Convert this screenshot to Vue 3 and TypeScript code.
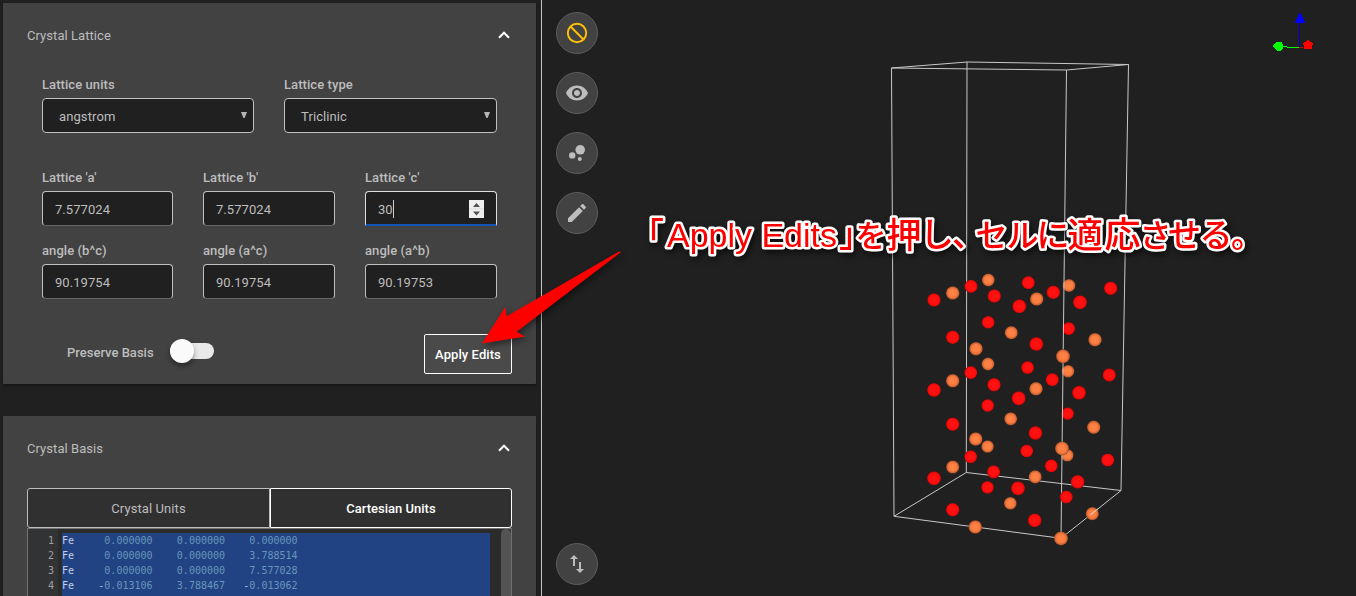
<script setup lang="ts">
interface Field { label: string; value: string; focused?: boolean }
interface Atom { x: number; y: number; kind: 'o' | 'fe'; r: number }
interface Glyph { ch: string; x: number; y: number; size: number }

const selects: Field[] = [
  { label: 'Lattice units', value: 'angstrom' },
  { label: 'Lattice type', value: 'Triclinic' },
]
const lengths: Field[] = [
  { label: "Lattice 'a'", value: '7.577024' },
  { label: "Lattice 'b'", value: '7.577024' },
  { label: "Lattice 'c'", value: '30', focused: true },
]
const angles: Field[] = [
  { label: 'angle (b^c)', value: '90.19754' },
  { label: 'angle (a^c)', value: '90.19754' },
  { label: 'angle (a^b)', value: '90.19753' },
]
const rows: string[][] = [
  ['0.000000', '0.000000', '0.000000'],
  ['0.000000', '0.000000', '3.788514'],
  ['0.000000', '0.000000', '7.577028'],
  ['-0.013106', '3.788467', '-0.013062'],
]
const pads = [13, 12, 12]

const make = (kind: 'o' | 'fe', pts: number[][]): Atom[] =>
  pts.map(([x, y, r]) => ({ x, y, kind, r: r ?? 6.8 }))

// Atoms behind the front vertical edge of the cell
const backAtoms: Atom[] = [
  ...make('fe', [[1069, 285.5, 6.5], [1068, 371.2, 6.3], [1067.3, 455.3, 6.3]]),
  ...make('o', [[1068.7, 328.6, 6.5], [1067.7, 413.6, 6.3]]),
]
const frontAtoms: Atom[] = [
  ...make('o', [
    [934, 300], [971, 286.3, 6.6], [994.3, 296], [1028.3, 282.7, 6.6], [1019.3, 306.3, 7], [1053.3, 292.3],
    [1080, 302.3, 7], [1110.7, 288.3], [988.2, 322.3, 6.4], [952.7, 337.3], [1036.3, 344, 7], [1027.6, 367.6, 6.5],
    [970.8, 372.6, 6.5], [994, 384.7], [934, 390, 7], [1052.3, 379.7, 6.6], [1079, 392.8, 7], [1109.3, 375, 6.7],
    [1018.7, 398.2, 7], [987.7, 405.5, 6.4], [952.7, 424.2], [1035.4, 433, 6.9], [1026.7, 451, 6.5],
    [970.7, 456.7, 6.5], [1051.3, 465.8, 6.5], [1107.7, 460, 6.6], [934, 478.3, 7], [993.6, 471.8, 6.6],
    [987.5, 487.4, 6.4], [1018, 488.3, 7], [1077.7, 481.8, 6.9], [1066.3, 497, 6.5], [952.7, 509.7],
    [1034.7, 520.3, 6.9],
  ]),
  ...make('fe', [
    [952.7, 293], [988.3, 280, 6.4], [1036.7, 299], [1011.3, 332.7, 6.6], [1095, 339.7], [976, 348.7],
    [988, 364, 6.4], [1063, 356.3, 7], [952.7, 380.8], [1036, 388.7], [1010.7, 418.8, 6.5], [1093.7, 427.3, 6.7],
    [975.7, 439], [987.6, 446.5, 6.3], [1062, 448.4, 7], [952.7, 467, 6.6], [1035.2, 476.8, 6.6],
    [1010.3, 503.3, 6.4], [975.3, 527, 6.8], [1092.3, 513.7, 6.6], [1061, 538.4, 7],
  ]),
]

const glyphs: Glyph[] = [
  { ch: '「', x: 630, y: 247, size: 34 },
  { ch: '」', x: 839, y: 247, size: 34 },
  { ch: 'を', x: 855.5, y: 247, size: 31 },
  { ch: '押', x: 886.5, y: 247.5, size: 35 },
  { ch: 'し', x: 920, y: 247, size: 34 },
  { ch: '、', x: 952, y: 246, size: 33 },
  { ch: 'セ', x: 975.5, y: 246.5, size: 32 },
  { ch: 'ル', x: 1006.5, y: 246.5, size: 32 },
  { ch: 'に', x: 1036.5, y: 247, size: 33 },
  { ch: '適', x: 1067.5, y: 247.5, size: 35.5 },
  { ch: '応', x: 1104.5, y: 247.5, size: 36 },
  { ch: 'さ', x: 1139.5, y: 247, size: 32 },
  { ch: 'せ', x: 1168, y: 247, size: 33 },
  { ch: 'る', x: 1199.5, y: 247, size: 33 },
  { ch: '。', x: 1231, y: 247, size: 33 },
]
</script>

<template>
  <div class="app">
    <aside class="panel">
      <section class="card lattice">
        <header class="head">
          <span>Crystal Lattice</span>
          <svg class="chev" viewBox="0 0 12 8"><path d="M1 6.7 6 1.7l5 5" /></svg>
        </header>
        <div class="grid two">
          <div v-for="f in selects" :key="f.label" class="field">
            <label>{{ f.label }}</label>
            <div class="box select">
              <span>{{ f.value }}</span>
              <svg class="caret" viewBox="0 0 6 6"><path d="M0 0h6L3.6 6H2.4z" /></svg>
            </div>
          </div>
        </div>
        <div class="grid three first">
          <div v-for="f in lengths" :key="f.label" class="field">
            <label>{{ f.label }}</label>
            <div class="box" :class="{ focused: f.focused }">
              <span>{{ f.value }}</span><i v-if="f.focused" class="cursor"></i>
              <svg v-if="f.focused" class="spin" viewBox="0 0 15 18">
                <rect width="15" height="18" />
                <path d="M4 7 7.5 3 11 7zM4 11.5h7L7.5 15.5z" /><path class="sep" d="M0 9h15" />
              </svg>
            </div>
          </div>
        </div>
        <div class="grid three second">
          <div v-for="f in angles" :key="f.label" class="field">
            <label>{{ f.label }}</label>
            <div class="box"><span>{{ f.value }}</span></div>
          </div>
        </div>
        <div class="actions">
          <span class="preserve">Preserve Basis</span>
          <span class="toggle"><i></i></span>
          <button class="apply">Apply Edits</button>
        </div>
      </section>

      <section class="card basis">
        <header class="head">
          <span>Crystal Basis</span>
          <svg class="chev" viewBox="0 0 12 8"><path d="M1 6.7 6 1.7l5 5" /></svg>
        </header>
        <div class="tabs">
          <button class="tab">Crystal Units</button>
          <button class="tab active">Cartesian Units</button>
        </div>
        <div class="editor">
          <div class="gutter"><div v-for="(r, i) in rows" :key="i">{{ i + 1 }}</div></div>
          <div class="code">
            <div v-for="(r, i) in rows" :key="i" class="line">Fe<template v-for="(n, j) in r" :key="j"><span class="num">{{ ' '.repeat(pads[j] - n.length) }}<b v-if="n[0] === '-'">-</b>{{ n.replace('-', '') }}</span></template></div>
          </div>
          <div class="scroll"><i></i></div>
        </div>
      </section>
    </aside>

    <main class="viewer">
      <nav class="tools">
        <button class="tool"><svg viewBox="0 0 24 24" class="ban"><circle cx="12" cy="12" r="9.2" /><path d="M5.5 5.5l13 13" /></svg></button>
        <button class="tool"><svg viewBox="0 0 24 24"><path d="M12 4.500C7 4.500 2.730 7.610 1 12c1.730 4.390 6 7.500 11 7.500s9.270-3.110 11-7.500c-1.730-4.390-6-7.500-11-7.500zM12 17c-2.760 0-5-2.240-5-5s2.240-5 5-5 5 2.240 5 5-2.240 5-5 5zm0-8c-1.660 0-3 1.340-3 3s1.340 3 3 3 3-1.340 3-3-1.340-3-3-3z" /></svg></button>
        <button class="tool"><svg viewBox="0 0 24 24"><circle cx="7.2" cy="14.4" r="3.2" /><circle cx="14.8" cy="18" r="2" /><circle cx="15.2" cy="8.8" r="4.8" /></svg></button>
        <button class="tool"><svg viewBox="0 0 24 24"><path d="M3 17.250V21h3.750L17.810 9.940l-3.750-3.750L3 17.250zM20.710 7.040c.39-.39.39-1.020 0-1.410l-2.340-2.340c-.39-.39-1.020-.39-1.410 0l-1.830 1.830 3.750 3.750 1.830-1.830z" /></svg></button>
        <button class="tool last"><svg viewBox="0 0 24 24"><path d="M16 17.010V10h-2v7.010h-3L15 21l4-3.990h-3zM9 3L5 6.990h3V14h2V6.990h3L9 3z" /></svg></button>
      </nav>
    </main>

    <svg class="scene" viewBox="0 0 1356 596">
      <defs>
        <radialGradient id="gO"><stop offset="0" stop-color="#ff1414" /><stop offset=".72" stop-color="#ff0d0d" /><stop offset=".9" stop-color="#d80a0a" /><stop offset="1" stop-color="#850808" /></radialGradient>
        <radialGradient id="gFe"><stop offset="0" stop-color="#ff8547" /><stop offset=".62" stop-color="#fa7c40" /><stop offset=".88" stop-color="#c96232" /><stop offset="1" stop-color="#7b3d20" /></radialGradient>
      </defs>
      <circle v-for="(a, i) in backAtoms" :key="'b' + i" :cx="a.x" :cy="a.y" :r="a.r" :fill="a.kind === 'o' ? 'url(#gO)' : 'url(#gFe)'" />
      <g class="cell">
        <path d="M891.5 68 967 62l161.500 2.500L1066.500 70z" />
        <path d="M894 516.300 966.300 472.500 1121 490.500 1061 538.300z" />
        <path d="M891.500 68 894 516.300M967 62 966.300 472.500M1128.500 64.500 1121 490.500M1066.500 70 1061 538.300" />
      </g>
      <circle v-for="(a, i) in frontAtoms" :key="'f' + i" :cx="a.x" :cy="a.y" :r="a.r" :fill="a.kind === 'o' ? 'url(#gO)' : 'url(#gFe)'" />
      <path class="front-edge" d="M1098 508.800 1090.500 514.800" />

      <g shape-rendering="crispEdges">
        <path d="M1299.500 23v24" stroke="#0000c8" />
        <path d="M1300 11.500 1305.500 23h-11z" fill="#00f" />
        <path d="M1283 46.500h4M1287 47.500h12" stroke="#0f0" />
        <path d="M1272 46 1277.500 41.500h3.500l2 3.500v3l-2 3h-4z" fill="#0f0" />
        <path d="M1299 47.500h4" stroke="#c00" />
        <path d="M1308 40 1313 43.500 1311.500 49h-7L1303 43.500z" fill="#f00" />
      </g>

      <path class="arrow" d="M482 343.500 505.300 307 506.700 316.300 619 251.500Q620.500 251 620.500 252.500L516.700 331.700 525.200 336.400z" />

      <g class="caption">
        <text x="667" y="247" class="latin" textLength="170" lengthAdjust="spacing">Apply Edits</text>
        <text><tspan v-for="g in glyphs" :key="g.ch" :x="g.x" :y="g.y" :font-size="g.size">{{ g.ch }}</tspan></text>
      </g>
    </svg>
  </div>
</template>

<style>
body { background: #202020; overflow: hidden; }
</style>
<style scoped>
* { box-sizing: border-box; }
.app { position: relative; display: flex; width: 1356px; height: 596px; overflow: hidden; background: #202020; color: #bdbdbd; font-family: Roboto, "Noto Sans", sans-serif; font-size: 13px; }
.panel { width: 542px; flex: none; padding: 3px 5px 0 3px; border-right: 1px solid #c4c4c4; }
.card { background: #424242; padding: 0 24px; border-radius: 1px; box-shadow: 0 2px 3px rgba(0, 0, 0, .35); }
.lattice { height: 381px; }
.basis { height: 220px; margin-top: 32px; }
.head { height: 64px; display: flex; align-items: center; justify-content: space-between; letter-spacing: .06px; }
.chev { width: 12px; height: 8px; margin-right: 2px; fill: none; stroke: #fff; stroke-width: 2; }
.grid { display: grid; margin: 0 15px; }
.two { grid-template-columns: 212px 213px; column-gap: 30px; padding-top: 8px; }
.three { grid-template-columns: 131px 132px 132px; column-gap: 30px; }
.first { margin-top: 35px; }
.second { margin-top: 15px; }
.field label { display: block; height: 20px; line-height: 20px; margin-bottom: 3px; font-weight: 500; letter-spacing: .07px; white-space: nowrap; }
.box { height: 35px; border: 1px solid #c0c0c0; border-bottom-color: #666; border-radius: 4px; background: #202020; padding: 2px 12px 0; display: flex; align-items: center; letter-spacing: .06px; }
.select { border-color: #c0c0c0; padding: 2px 6px 0 16px; justify-content: space-between; letter-spacing: .1px; }
.caret { width: 6px; height: 6px; margin-top: -4px; fill: #b5b5b5; }
.focused { border-color: #dedede; border-bottom: 2px solid #1555b5; border-radius: 4px 4px 0 0; }
.cursor { width: 1px; height: 18px; background: #ccc; }
.spin { width: 15px; height: 18px; margin-left: auto; fill: #505050; }
.spin rect { fill: #efefef; }
.spin .sep { stroke: #ddd; }
.actions { display: flex; align-items: center; height: 40px; margin-top: 35px; padding-left: 40px; }
.preserve { width: 103px; font-weight: 500; margin-top: -3px; }
.toggle { position: relative; width: 44px; height: 16px; border-radius: 8px; background: #e9e9e9; margin-top: -6px; }
.toggle i { position: absolute; left: 0; top: -4px; width: 24px; height: 24px; border-radius: 50%; background: #fafafa; box-shadow: 0 3px 5px rgba(0, 0, 0, .4); }
button { font: inherit; color: inherit; padding: 0; margin: 0; }
.apply { width: 88px; height: 40px; margin-left: auto; border: 1px solid #fff; border-radius: 2px; background: #4a4a4a; color: #fff; font-weight: 500; letter-spacing: .08px; }
.tabs { display: flex; height: 40px; margin-top: 8px; }
.tab { width: 243px; border: 1px solid #bdbdbd; border-radius: 3px 0 0 3px; background: #303030; letter-spacing: .1px; }
.tab.active { width: 242px; border-color: #fff; border-radius: 0 3px 3px 0; color: #fff; font-weight: 500; letter-spacing: 0; }
.editor { display: flex; height: 80px; border: 1px solid #737373; background: #2b2b2b; font: 10px/15px "DejaVu Sans Mono", monospace; letter-spacing: .02px; }
.gutter { width: 30px; padding: 4px 4px 0 0; background: #313335; color: #a0a0a0; text-align: right; }
.code { width: 428px; margin: 4px 0 0 4px; background: #214283; color: #c4d0e2; white-space: pre; }
.line { height: 15px; }
.num { color: #6897bb; }
.num b { font-weight: 400; color: #b6c2d6; }
.scroll { width: 10px; margin-left: auto; background: #353535; }
.scroll i { display: block; height: 90px; border-radius: 5px; background: #535353; }
.viewer { flex: 1; }
.tools { display: flex; flex-direction: column; gap: 18px; height: 596px; width: 42px; margin-left: 14px; padding: 12px 0 11px; }
.tool { flex: none; width: 42px; height: 42px; border-radius: 50%; border: 1px solid #5c5c5c; background: #424242; display: flex; align-items: center; justify-content: center; }
.tool svg { width: 24px; height: 24px; fill: #bdbdbd; }
.tool svg.ban { fill: none; stroke: #ffc107; stroke-width: 1.9; }
.last { margin-top: auto; }
.scene { position: absolute; inset: 0; width: 1356px; height: 596px; pointer-events: none; }
.cell { fill: none; stroke: #c8c8c8; stroke-width: 1; }
.front-edge { stroke: #ddd; stroke-width: 1; }
.arrow { fill: #f00; filter: drop-shadow(2px 3px 3px rgba(0, 0, 0, .45)); }
.caption { font-family: "Noto Sans CJK JP", sans-serif; font-size: 33px; font-weight: 500; fill: #f00; stroke: #fff; stroke-width: 5px; stroke-linejoin: round; paint-order: stroke; filter: drop-shadow(2px 3px 3px rgba(0, 0, 0, .6)); }
.latin { font-family: "Liberation Sans", sans-serif; font-size: 34px; font-weight: 400; }
</style>
